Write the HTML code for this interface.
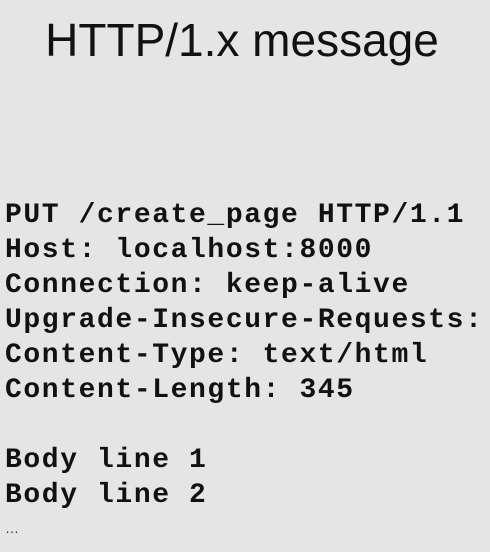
<!DOCTYPE html>
<html><head><style>
html,body{margin:0;padding:0;}
body{width:490px;height:552px;background:#e5e5e5;position:relative;overflow:hidden;}
.t{position:absolute;left:0;width:484px;text-align:center;top:13px;font:46px "Liberation Sans",sans-serif;color:#111;}
.m{position:absolute;left:5px;font:bold 28px/35px "Liberation Mono",monospace;letter-spacing:1.6px;color:#111;white-space:pre;}
.d{position:absolute;left:5px;top:520px;font:14px "Liberation Sans",sans-serif;color:#333;}
</style></head><body>
<div class="t">HTTP/1.x message</div>
<div class="m" style="top:198px">PUT /create_page HTTP/1.1
Host: localhost:8000
Connection: keep-alive
Upgrade-Insecure-Requests:
Content-Type: text/html
Content-Length: 345

Body line 1
Body line 2</div>
<div class="d">…</div>
</body></html>
